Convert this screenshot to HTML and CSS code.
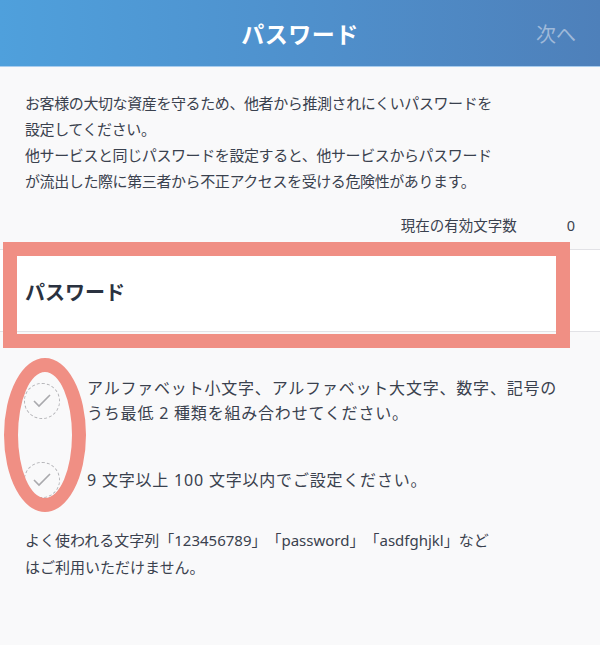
FILE: index.html
```html
<!DOCTYPE html>
<html lang="ja">
<head>
  <meta charset="utf-8">
  <title>パスワード</title>
  <link rel="stylesheet" href="styles.css">
</head>
<body>
  <header class="topbar">
    <h1 class="topbar-title">パスワード</h1>
    <span class="topbar-next">次へ</span>
  </header>

  <p class="intro">
    お客様の大切な資産を守るため、他者から推測されにくいパスワードを<br>
    設定してください。<br>
    他サービスと同じパスワードを設定すると、他サービスからパスワード<br>
    が流出した際に第三者から不正アクセスを受ける危険性があります。
  </p>

  <div class="counter">
    <span>現在の有効文字数</span>
    <span class="counter-num">0</span>
  </div>

  <div class="field">
    <span class="field-label">パスワード</span>
    <div class="mark-box"></div>
  </div>

  <ul class="rules">
    <li class="rule">
      <span class="check">
        <svg width="20" height="16" viewBox="0 0 20 16"><polyline points="2,8 7,13 18,2" fill="none" stroke="#a9a9ad" stroke-width="1.6"/></svg>
      </span>
      <span class="rule-text">アルファベット小文字、アルファベット大文字、数字、記号の<br>うち最低 2 種類を組み合わせてください。</span>
    </li>
    <li class="rule">
      <span class="check">
        <svg width="20" height="16" viewBox="0 0 20 16"><polyline points="2,8 7,13 18,2" fill="none" stroke="#a9a9ad" stroke-width="1.6"/></svg>
      </span>
      <span class="rule-text">9 文字以上 100 文字以内でご設定ください。</span>
    </li>
    <li class="mark-oval"></li>
  </ul>

  <p class="note">
    よく使われる文字列「123456789」「password」「asdfghjkl」など<br>
    はご利用いただけません。
  </p>
</body>
</html>
```

FILE: styles.css
```css
body{
  margin: 0;
  background: #f9f9fa;
  color: #3a414e;
  font-family: "Noto Sans", "Noto Sans CJK JP", sans-serif;
  font-size: 15px;
  text-spacing-trim: space-all;
}

.topbar{
  height: 66px;
  display: flex;
  align-items: center;
  justify-content: center;
  position: relative;
  background: linear-gradient(90deg, #4fa0dc 0%, #4f8fcb 55%, #4e80ba 100%);
  border-bottom: 1px solid #a9cdee;
}
.topbar-title{
  margin: 0;
  color: #fff;
  font-size: 23px;
  font-weight: bold;
  letter-spacing: 0.5px;
}
.topbar-next{
  position: absolute;
  right: 24px;
  top: 19px;
  color: #9fb9d9;
  font-size: 20px;
}

.intro{
  margin: 0;
  padding: 23px 25px 0;
  line-height: 26px;
  letter-spacing: -0.4px;
}

.counter{
  display: flex;
  justify-content: flex-end;
  gap: 50px;
  margin-top: 18px;
  padding-right: 25px;
  line-height: 26px;
  font-size: 14.5px;
}

.field{
  position: relative;
  margin-top: 11px;
  height: 81px;
  display: flex;
  align-items: center;
  padding-left: 25px;
  background: #fff;
  border-top: 1px solid #e2e2e6;
  border-bottom: 1px solid #e2e2e6;
}
.field-label{
  color: #2a3240;
  font-size: 20px;
  font-weight: bold;
  padding-top: 2px;
}
.mark-box{
  position: absolute;
  left: 3px;
  top: -8px;
  width: 539px;
  height: 78px;
  border: 14px solid #f08f84;
}

.rules{
  position: relative;
  list-style: none;
  margin: 44px 0 0;
  padding: 0 0 0 24px;
  display: flex;
  flex-direction: column;
  gap: 36px;
}
.rule{
  display: flex;
  align-items: center;
  gap: 27px;
}
.check{
  flex: none;
  width: 34px;
  height: 34px;
  border: 1.5px dashed #b4b4b8;
  border-radius: 50%;
  display: flex;
  align-items: center;
  justify-content: center;
}
.rule-text{
  font-size: 16px;
  line-height: 25px;
  letter-spacing: 0.8px;
}
.mark-oval{
  position: absolute;
  left: 4px;
  top: -18px;
  width: 54px;
  height: 126px;
  border: 14px solid #f08f84;
  border-radius: 50%;
}

.note{
  margin: 29px 0 0;
  padding: 0 25px;
  line-height: 27px;
}
```
